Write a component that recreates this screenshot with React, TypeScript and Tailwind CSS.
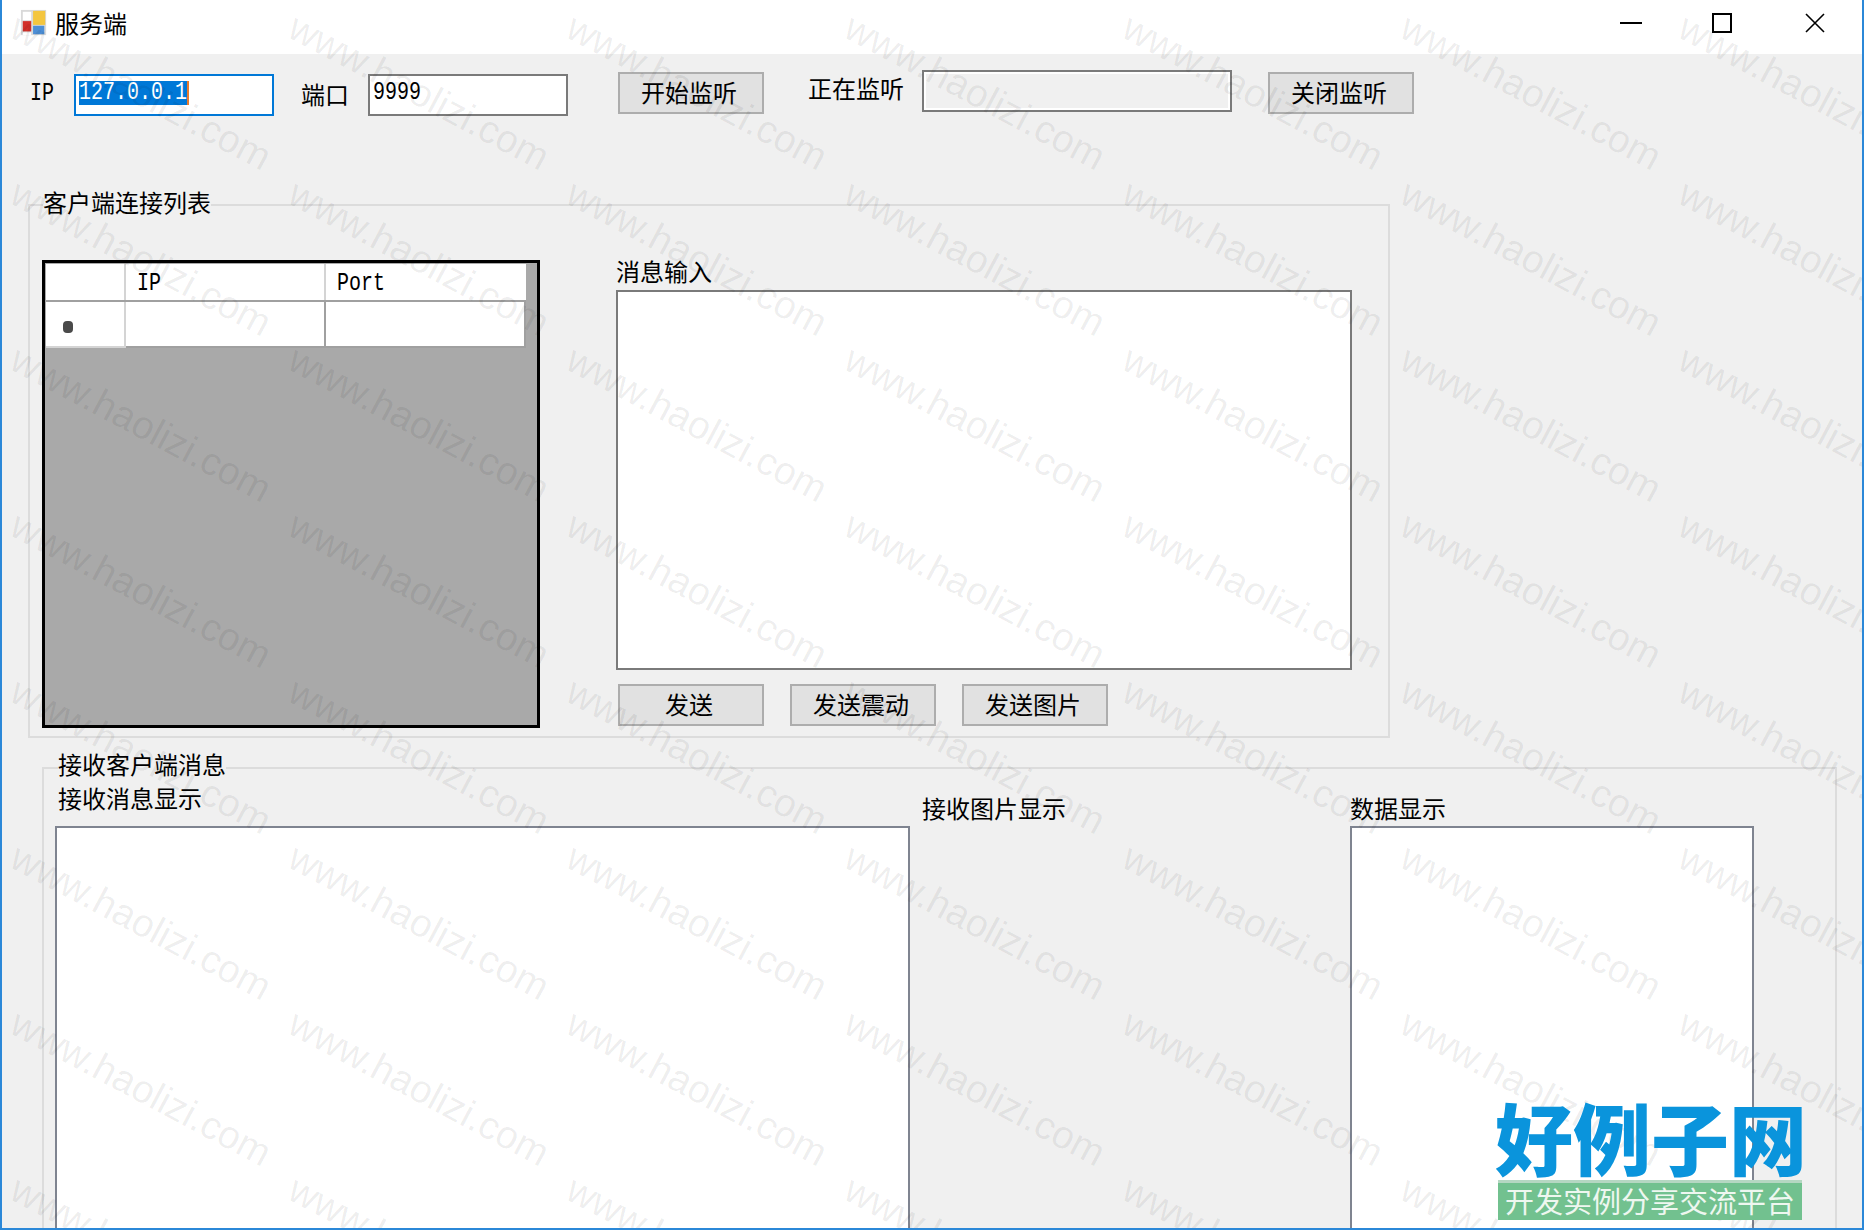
const cjk = "font-['Noto_Sans_CJK_SC',sans-serif] text-[24px] leading-[26px] text-black"
const mono = "font-['Liberation_Mono',monospace] text-[20px] leading-[24px] text-black"
const tall = 'inline-block scale-y-[1.25]'
const btn = `${cjk} flex h-[42px] w-[146px] items-center justify-center border-2 border-[#adadad] bg-[#e1e1e1] pb-[2px] pr-[4px]`
const input = `${mono} h-[42px] w-[200px] border-2 bg-white pl-[3px] pt-[5px]`

function AppIcon() {
  return (
    <svg width="28" height="28" viewBox="0 0 30 30">
      <rect x="1" y="1" width="27" height="27" fill="#d9d9d9" />
      <rect x="3" y="3" width="9" height="9" fill="#fff" />
      <rect x="14" y="2" width="13" height="15" fill="#f4c63f" />
      <rect x="3" y="13" width="9" height="11" fill="#d3302a" />
      <rect x="14" y="18" width="12" height="9" fill="#4d8fd6" />
      <rect x="3" y="25" width="9" height="3" fill="#fff" />
    </svg>
  )
}

function WindowButtons() {
  return (
    <div className="ml-auto flex items-center pb-[1px]">
      <div className="h-[2px] w-[22px] bg-black" />
      <div className="ml-[70px] h-[20px] w-[20px] border-2 border-black" />
      <svg className="ml-[73px] mr-[37px]" width="20" height="20" viewBox="0 0 20 20">
        <path d="M1 1 L19 19 M19 1 L1 19" stroke="#000" strokeWidth="1.6" fill="none" />
      </svg>
    </div>
  )
}

function ClientGrid() {
  return (
    <div className="h-[468px] w-[498px] shrink-0 border-[3px] border-black bg-[#a9a9a9]">
      <div className="ml-[1px] mt-[1px] grid h-[38px] w-[480px] grid-cols-[80px_200px_200px] border-b-2 border-[#a0a0a0] bg-white">
        <div className="border-r-2 border-[#d4d4d4]" />
        <div className={`${mono} border-r-2 border-[#d4d4d4] pl-[11px] pt-[8px]`}><span className={tall}>IP</span></div>
        <div className={`${mono} pl-[11px] pt-[8px]`}><span className={tall}>Port</span></div>
      </div>
      <div className="ml-[1px] grid h-[46px] w-[480px] grid-cols-[80px_200px_200px] bg-white">
        <div className="flex items-center border-b-2 border-r-2 border-[#d4d4d4] pl-[17px] pt-[6px]">
          <div className="h-[12px] w-[10px] rounded-[4px] bg-[#4a4a4a]" />
        </div>
        <div className="border-b-2 border-r-2 border-[#a0a0a0]" />
        <div className="border-b-2 border-r-2 border-[#a0a0a0]" />
      </div>
    </div>
  )
}

function Watermark() {
  const cells = Array.from({ length: 56 }, (_, i) => i)
  return (
    <div className="pointer-events-none absolute left-[14px] top-[5px] grid grid-cols-[repeat(7,278px)] auto-rows-[166px]">
      {cells.map(i => (
        <div key={i} className="h-[166px] w-[278px]">
          <span className="block origin-top-left translate-x-[8px] rotate-[28deg] whitespace-nowrap font-['Liberation_Sans',sans-serif] text-[39px] leading-[44px] text-[#000]/[0.07]">
            www.haolizi.com
          </span>
        </div>
      ))}
    </div>
  )
}

export default function App() {
  return (
    <div className="relative h-[1230px] w-[1864px] overflow-hidden border-x-2 border-b-2 border-[#2b88d8] bg-[#f0f0f0]">
      {/* title bar */}
      <div className="flex h-[54px] items-center bg-white pb-[8px] pl-[18px]">
        <AppIcon />
        <span className={`${cjk} ml-[7px]`}>服务端</span>
        <WindowButtons />
      </div>

      {/* listen controls */}
      <div className="ml-[28px] mt-[16px] flex h-[46px] items-start">
        <div className={`${mono} mt-[12px] w-[44px]`}><span className={tall}>IP</span></div>
        <div className={`${input} mt-[4px] border-[#0078d7]`}>
          <span className="inline-block border-r-2 border-[#e87a2c] bg-[#0078d7] text-white"><span className={tall}>127.0.0.1</span></span>
        </div>
        <div className={`${cjk} ml-[27px] mt-[11px] w-[48px]`}>端口</div>
        <div className={`${input} ml-[19px] mt-[4px] border-[#7a7a7a]`}><span className={tall}>9999</span></div>
        <div className={`${btn} ml-[50px] mt-[2px] w-[145px]`}>开始监听</div>
        <div className={`${cjk} ml-[44px] mt-[5px] w-[96px]`}>正在监听</div>
        <div className="ml-[18px] h-[42px] w-[310px] border-2 border-[#7a7a7a] bg-[#f0f0f0] shadow-[inset_0_0_0_2px_#fff]" />
        <div className={`${btn} ml-[36px] mt-[2px]`}>关闭监听</div>
      </div>

      {/* client list group */}
      <div className="relative ml-[26px] mt-[88px] flex h-[534px] w-[1362px] border-2 border-[#dcdcdc] pl-[12px] pt-[54px]">
        <div className={`${cjk} absolute left-[13px] top-[-17px] bg-[#f0f0f0]`}>客户端连接列表</div>
        <ClientGrid />
        <div className="ml-[76px] flex flex-col">
          <div className={`${cjk} -mt-[2px] h-[32px]`}>消息输入</div>
          <div className="h-[380px] w-[736px] border-2 border-[#7a7a7a] bg-white" />
          <div className="ml-[2px] mt-[14px] flex gap-[26px]">
            <div className={btn}>发送</div>
            <div className={btn}>发送震动</div>
            <div className={btn}>发送图片</div>
          </div>
        </div>
      </div>

      {/* received messages group */}
      <div className="relative ml-[40px] mt-[29px] flex h-[600px] w-[1795px] border-2 border-[#dcdcdc] pl-[11px]">
        <div className={`${cjk} absolute left-[14px] top-[-18px] bg-[#f0f0f0]`}>接收客户端消息</div>
        <div className="w-[855px] shrink-0 pt-[16px]">
          <div className={`${cjk} ml-[3px] h-[41px]`}>接收消息显示</div>
          <div className="h-[500px] border-2 border-[#7f8490] bg-white" />
        </div>
        <div className="ml-[12px] w-[428px] shrink-0 pt-[26px]">
          <div className={cjk}>接收图片显示</div>
        </div>
        <div className="w-[404px] shrink-0 pt-[26px]">
          <div className={`${cjk} h-[31px]`}>数据显示</div>
          <div className="h-[500px] border-2 border-[#7f8490] bg-white" />
        </div>
      </div>

      <Watermark />

      {/* site logo */}
      <div className="absolute left-[1496px] top-[1098px] w-[304px]">
        <div className="-ml-[3px] mb-[6px] whitespace-nowrap font-['Noto_Sans_CJK_SC',sans-serif] text-[78px] font-black leading-[76px] text-[#0a94dc]">好例子网</div>
        <div className="flex h-[40px] items-center justify-center border-t-[3px] border-[#b5d7c2] bg-[#72c18f] pb-[4px] font-['Noto_Sans_CJK_SC',sans-serif] text-[29px] leading-[32px] text-[#eef7f0]">
          开发实例分享交流平台
        </div>
      </div>
    </div>
  )
}
